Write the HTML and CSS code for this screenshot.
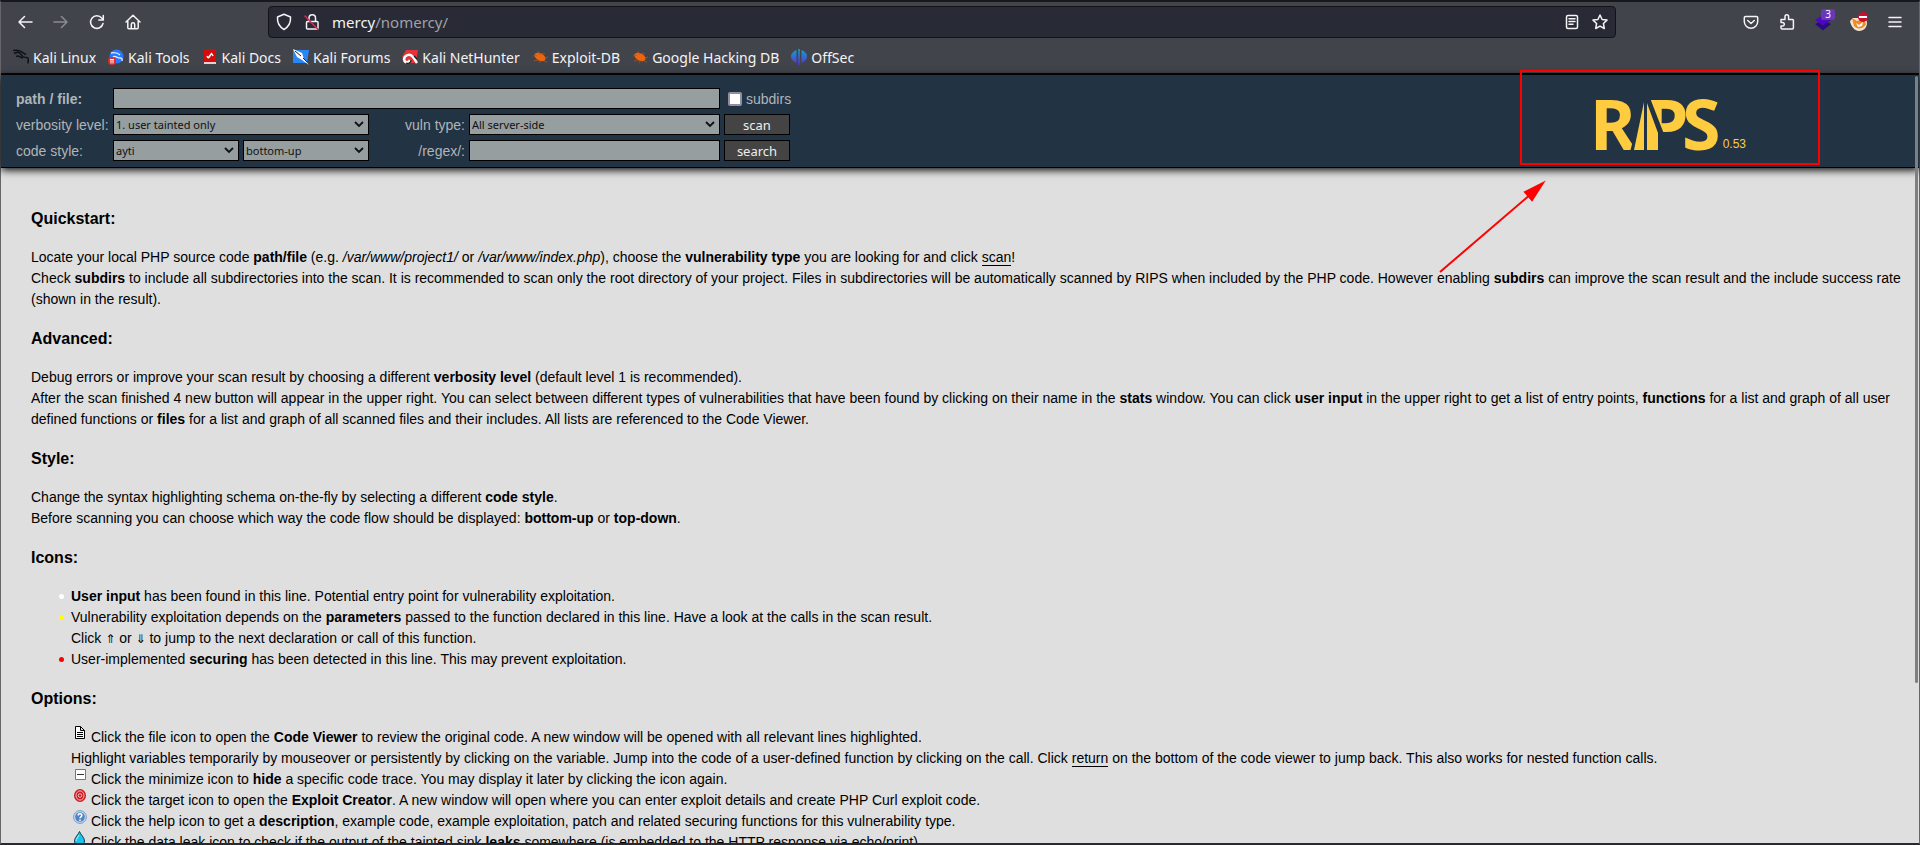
FILE: index.html
```html
<!DOCTYPE html>
<html lang="en">
<head>
<meta charset="utf-8">
<title>RIPS - A static source code analyser for vulnerabilities in PHP scripts</title>
<link rel="stylesheet" href="styles.css">
</head>
<body>
<div class="window">
  <div class="toolbar">
    <nav class="nav-buttons" aria-label="Navigation">
      <button type="button" class="icon-btn" aria-label="Back"><svg width="16" height="16" viewBox="0 0 16 16"><path d="M15 8H2M7.500 2.500 2 8l5.500 5.500"/></svg></button>
      <button type="button" class="icon-btn disabled" aria-label="Forward" disabled><svg width="16" height="16" viewBox="0 0 16 16"><path d="M1 8h13M8.500 2.500 14 8l-5.500 5.500"/></svg></button>
      <button type="button" class="icon-btn" aria-label="Reload"><svg width="16" height="16" viewBox="0 0 16 16"><path d="M14 9.500A6.300 6.300 0 1 1 12.700 4L14 5.500"/><path d="M14.300 1.500V6H9.800"/></svg></button>
      <button type="button" class="icon-btn" aria-label="Home"><svg width="16" height="16" viewBox="0 0 16 16"><path d="M1 8l7-6.800L15 8M2.800 7v6.700a1 1 0 0 0 1 1h8.400a1 1 0 0 0 1-1V7M6.300 14.500v-4a1.700 1.700 0 0 1 3.400 0v4"/></svg></button>
    </nav>
    <div class="urlbar">
      <svg width="16" height="18" viewBox="0 0 16 18"><path d="M8 1.200 14.500 4c.4 5-1.500 9.500-6.500 12.500C3 13.500 1.100 9 1.500 4Z"/></svg>
      <svg width="16" height="18" viewBox="0 0 16 18"><path d="M5 8V5a3 3 0 0 1 6.500 0v3M3.500 8.500h9.500a1 1 0 0 1 1 1v5.500a1 1 0 0 1-1 1H3.500a1 1 0 0 1-1-1V9.500a1 1 0 0 1 1-1Z"/><path class="slash" d="M1 3l13 13.500"/></svg>
      <span class="url"><b>mercy</b>/nomercy/</span>
      <button type="button" class="icon-btn" aria-label="Reader view"><svg width="14" height="16" viewBox="0 0 14 16"><rect x="1.500" y="1.500" width="11" height="13" rx="1.500"/><path d="M4 4.800h6M4 7.500h6M4 10.200h4"/></svg></button>
      <button type="button" class="icon-btn" aria-label="Bookmark this page"><svg width="16" height="16" viewBox="0 0 16 16"><path d="M8 1l2.100 4.500 4.900.6-3.600 3.400.9 5L8 12.100l-4.300 2.400.9-5L1 6.100l4.900-.6Z"/></svg></button>
    </div>
    <div class="extensions">
      <button type="button" class="icon-btn" aria-label="Pocket"><svg width="16" height="16" viewBox="0 0 16 16"><path d="M2.500 2.500h11a1.200 1.200 0 0 1 1.200 1.200V7.500a6.700 6.700 0 0 1-13.400 0V3.700a1.200 1.200 0 0 1 1.200-1.200ZM4.700 6.500 8 9.500l3.300-3"/></svg></button>
      <button type="button" class="icon-btn" aria-label="Extensions"><svg width="16" height="18" viewBox="0 0 16 18"><path d="M2 6.500h4V3.500a1.800 1.800 0 0 1 3.600 0v3h4a.8.8 0 0 1 .8.800V15a1 1 0 0 1-1 1H3a1 1 0 0 1-1-1v-2h1.500a1.800 1.800 0 0 0 0-3.600H2Z"/></svg></button>
      <button type="button" class="icon-btn" aria-label="Wappalyzer, 3 found"><svg width="16" height="18" viewBox="0 0 16 18"><path fill="#2b0a80" stroke="none" d="M0 11l8-4 8 4-8 6.500Z"/><path fill="#4b08bd" stroke="none" d="M0 7l8-5 8 5-8 5.500Z"/></svg><span class="badge">3</span></button>
      <button type="button" class="icon-btn" aria-label="FoxyProxy, disabled"><svg class="fox" width="20" height="20" viewBox="0 0 20 20"><g stroke="none"><path fill="#f1e4d4" d="M1 9l3-3h13l1 5c0 5-4 8-8 8s-8-4-9-10Z"/><path fill="#f08a24" d="M3 6l5 3 7-2 2 5c-2 5-9 6-12 2Z"/><path fill="#fff" d="M7 11l3 2 4-3-1 4-4 1Z"/><circle cx="14" cy="5" r="5" fill="#c8102e"/><path fill="#fff" d="M10 4h8v2h-8z"/></g></svg></button>
      <button type="button" class="icon-btn" aria-label="Menu"><svg width="14" height="16" viewBox="0 0 14 16"><path d="M1 3.500h12M1 8h12M1 12.500h12"/></svg></button>
    </div>
  </div>

  <nav class="bookmarks" aria-label="Bookmarks">
    <a href="#"><svg width="16" height="16" viewBox="0 0 16 16"><path fill="none" stroke="#111417" stroke-width="1.600" d="M0 1.500c5-1 8 0 11 3l2 1M1 4.500c4-2 6-1 7 1s4 3 6 3 1 3 1 6M3 7.500c3-2 3 1 7 1.500"/></svg>Kali Linux</a>
    <a href="#"><svg width="16" height="16" viewBox="0 0 16 16"><circle cx="8.500" cy="7.500" r="7" fill="#2777ff"/><path fill="none" stroke="#dce9ff" stroke-width="1.400" d="M3 4c4-1 7 0 9 2M5 8c2-2 4 1 7 1s2 2 2 3"/><circle cx="4" cy="12" r="4" fill="#e12c2c"/><path stroke="#fff" d="M2 10.500h4M3 10.500v4M5 10.500v4"/></svg>Kali Tools</a>
    <a href="#"><svg width="16" height="16" viewBox="0 0 16 16"><path fill="#d40c0c" d="M2 1l1-1h11v13H2z"/><path fill="#e8d0d0" d="M2 13h12v2H2z"/><path fill="none" stroke="#fff" stroke-width="1.400" d="M5 7c1 3 2 2 3 0s2-3 3 0M6 9l4-5"/></svg>Kali Docs</a>
    <a href="#"><svg width="16" height="16" viewBox="0 0 16 16"><path fill="#2a86f5" d="M0 1h16l-2 13H0z"/><path fill="#fff" d="M0 0l9 4 2 6 5 6-7-5-5-3Z"/><path stroke="#1b1e24" d="M2 2l6 5M10 9l4 4"/></svg>Kali Forums</a>
    <a href="#"><svg width="16" height="16" viewBox="0 0 16 16"><path fill="#e3343b" d="M4 1h12l-2 13H4L0 8Z"/><path fill="none" stroke="#fff" stroke-width="2.500" d="M2 11c0-5 6-7 9-3s2 3 4 6M2 11c1 3 5 3 6 0"/><path fill="none" stroke="#15171b" stroke-width="1.200" d="M4 14c2 1 5 0 5-3M12 7l3 3"/></svg>Kali NetHunter</a>
    <a href="#"><svg width="16" height="16" viewBox="0 0 16 16"><ellipse cx="8" cy="8" rx="6" ry="3.600" transform="rotate(28 8 8)" fill="#f0640c"/><path stroke="#b9531c" stroke-width=".7" d="M1 7l4-1M6 2l2 4M10 4l3 1M2 12l4-1M7 14l2-3M13 9l3-1M12 12l3 1"/></svg>Exploit-DB</a>
    <a href="#"><svg width="16" height="16" viewBox="0 0 16 16"><ellipse cx="8" cy="8" rx="6" ry="3.600" transform="rotate(28 8 8)" fill="#f0640c"/><path stroke="#b9531c" stroke-width=".7" d="M1 7l4-1M6 2l2 4M10 4l3 1M2 12l4-1M7 14l2-3M13 9l3-1M12 12l3 1"/></svg>Google Hacking DB</a>
    <a href="#"><svg width="16" height="16" viewBox="0 0 16 16"><defs><linearGradient id="offsec" x1="0" y1="0" x2="0" y2="1"><stop offset="0" stop-color="#12a3c8"/><stop offset="1" stop-color="#5c2fd6"/></linearGradient></defs><path fill="url(#offsec)" d="M5.500 1v13C-2 11-2 4 5.500 1ZM7.200 0h1.600v16H7.200zM10.500 1v13c7.500-3 7.500-10 0-13Z"/></svg>OffSec</a>
  </nav>

  <div class="page">
    <header class="menu">
      <form class="options">
        <label for="location"><b>path / file:</b></label>
        <input type="text" id="location" class="field wide">
        <span class="check"><input type="checkbox" id="subdirs"><label for="subdirs">subdirs</label></span>

        <label for="verbosity">verbosity level:</label>
        <select id="verbosity" class="field"><option>1. user tainted only</option></select>
        <label for="vector" class="right">vuln type:</label>
        <select id="vector" class="field"><option>All server-side</option></select>
        <button type="button" class="action">scan</button>

        <label for="css">code style:</label>
        <span class="pair">
          <select id="css" class="field"><option>ayti</option></select>
          <select id="treestyle" class="field" aria-label="code flow"><option>bottom-up</option></select>
        </span>
        <label for="search" class="right">/regex/:</label>
        <input type="text" id="search" class="field">
        <button type="button" class="action">search</button>
      </form>
      <div class="logo">
        <svg width="126" height="60" viewBox="0 0 126 60">
          <text class="logo-letter" x="-6" y="55">R</text>
          <text class="logo-letter" x="49" y="55">P</text>
          <text class="logo-letter" x="86" y="55">S</text>
          <path class="logo-gap" d="M48 3h6l14 36v18H34Z"/>
          <path class="logo-mark" d="M48 7v48H38ZM51 8l11 30v17H51Z"/>
        </svg>
        <span class="version">0.53</span>
        <svg class="annotation" width="384" height="206" viewBox="0 0 384 206">
          <rect x="82" y="2" width="298" height="93"/>
          <path d="M1 203 92 125"/>
          <path class="arrow-head" d="M104 114 93 131l-7-8Z"/>
        </svg>
      </div>
    </header>

    <main class="content">
      <h3>Quickstart:</h3>
      <p>Locate your local PHP source code <b>path/file</b> (e.g. <em>/var/www/project1/</em> or <em>/var/www/index.php</em>), choose the <b>vulnerability type</b> you are looking for and click <a href="#">scan</a>!<br>
      Check <b>subdirs</b> to include all subdirectories into the scan. It is recommended to scan only the root directory of your project. Files in subdirectories will be automatically scanned by RIPS when included by the PHP code. However enabling <b>subdirs</b> can improve the scan result and the include success rate (shown in the result).</p>
      <h3>Advanced:</h3>
      <p>Debug errors or improve your scan result by choosing a different <b>verbosity level</b> (default level 1 is recommended).<br>
      After the scan finished 4 new button will appear in the upper right. You can select between different types of vulnerabilities that have been found by clicking on their name in the <b>stats</b> window. You can click <b>user input</b> in the upper right to get a list of entry points, <b>functions</b> for a list and graph of all user defined functions or <b>files</b> for a list and graph of all scanned files and their includes. All lists are referenced to the Code Viewer.</p>
      <h3>Style:</h3>
      <p>Change the syntax highlighting schema on-the-fly by selecting a different <b>code style</b>.<br>
      Before scanning you can choose which way the code flow should be displayed: <b>bottom-up</b> or <b>top-down</b>.</p>
      <h3>Icons:</h3>
      <ul class="markers">
        <li class="userinput"><b>User input</b> has been found in this line. Potential entry point for vulnerability exploitation.</li>
        <li class="functioninput">Vulnerability exploitation depends on the <b>parameters</b> passed to the function declared in this line. Have a look at the calls in the scan result.<br>Click <span class="jump">⇑</span> or <span class="jump">⇓</span> to jump to the next declaration or call of this function.</li>
        <li class="validated">User-implemented <b>securing</b> has been detected in this line. This may prevent exploitation.</li>
      </ul>
      <h3>Options:</h3>
      <ul class="plain">
        <li><svg width="14" height="14" viewBox="0 0 14 14"><path fill="#fff" stroke="#000" d="M2.500.5h5l4 4v8h-9ZM7.500.5v4h4M4 6.500h6M4 8.500h6M4 10.500h6"/></svg> Click the file icon to open the <b>Code Viewer</b> to review the original code. A new window will be opened with all relevant lines highlighted.<br>Highlight variables temporarily by mouseover or persistently by clicking on the variable. Jump into the code of a user-defined function by clicking on the call. Click <a href="#">return</a> on the bottom of the code viewer to jump back. This also works for nested function calls.</li>
        <li><svg width="14" height="14" viewBox="0 0 14 14"><path fill="#fff" stroke="#777" d="M2.500 1.500h10v10h-10z"/><path stroke="#333" d="M4 6.500h7"/></svg> Click the minimize icon to <b>hide</b> a specific code trace. You may display it later by clicking the icon again.</li>
        <li><svg width="14" height="14" viewBox="0 0 14 14"><ellipse cx="7" cy="6.500" rx="6" ry="6.500" fill="#cf1820"/><ellipse cx="7" cy="6.500" rx="4" ry="4.600" fill="none" stroke="#f2c4c4"/><circle cx="7" cy="6.500" r="1.800" fill="#cf1820" stroke="#f2c4c4"/></svg> Click the target icon to open the <b>Exploit Creator</b>. A new window will open where you can enter exploit details and create PHP Curl exploit code.</li>
        <li><svg width="14" height="14" viewBox="0 0 14 14"><circle cx="7" cy="7" r="6.400" fill="#c4daf3" stroke="#7d9cc4"/><circle cx="7" cy="7" r="4.800" fill="#5083c2"/><path fill="none" stroke="#fff" stroke-width="1.500" d="M5.200 5.500c0-2.200 3.600-2.200 3.600 0 0 1.300-1.800 1.300-1.800 2.800M7 9.500V11"/></svg> Click the help icon to get a <b>description</b>, example code, example exploitation, patch and related securing functions for this vulnerability type.</li>
        <li><svg width="14" height="14" viewBox="0 0 14 14"><path fill="#19c5ee" stroke="#123c4c" d="M6.500.5c1 3 5 6 5 9.500a5 5 0 0 1-10 0c0-3.500 4-6.500 5-9.500Z"/><path fill="none" stroke="#b8f3ff" d="M6 4c-1 2-3 4-3 6"/></svg> Click the data leak icon to check if the output of the tainted sink <b>leaks</b> somewhere (is embedded to the HTTP response via echo/print).</li>
      </ul>
    </main>
    <div class="scroll-thumb"></div>
  </div>
</div>
</body>
</html>
```
FILE: styles.css
```css
* {
  box-sizing: border-box;
}

body {
  margin: 0;
  background: #222226;
  font-family: "Liberation Sans", sans-serif;
  font-size: 14px;
}

.window {
  display: flex;
  flex-direction: column;
  height: 100vh;
  border: 1px solid #66666a;
  border-top: 2px solid #17181c;
  border-bottom: 2px solid #2a2a2e;
  background: #42444c;
}

/* Browser chrome */
.toolbar,
.bookmarks {
  flex: none;
  font-family: "Noto Sans", sans-serif;
  color: #f4f4f6;
}

.toolbar {
  display: flex;
  align-items: center;
  height: 39px;
  padding: 0 16px;
}

.toolbar svg {
  display: block;
  flex: none;
  fill: none;
  stroke: #f4f4f6;
  stroke-width: 1.5;
  stroke-linecap: round;
  stroke-linejoin: round;
}

.icon-btn {
  position: relative;
  display: flex;
  justify-content: center;
  width: 16px;
  padding: 0;
  border: 0;
  background: none;
}

.disabled {
  opacity: 0.4;
}

.nav-buttons,
.extensions {
  display: flex;
  align-items: center;
  gap: 20px;
}

.urlbar {
  display: flex;
  flex: 1;
  align-items: center;
  gap: 12px;
  height: 32px;
  margin: 0 127px;
  padding: 0 7px;
  border: 1px solid #121217;
  border-radius: 4px;
  background: #282a35;
}

.toolbar .slash {
  stroke: #e22850;
}

.url {
  flex: 1;
  color: #a0a1a8;
  font-size: 15px;
}

.url b {
  color: #f4f4f6;
  font-weight: normal;
}

.badge {
  position: absolute;
  top: -4px;
  left: 6px;
  width: 14px;
  border-radius: 2px;
  background: #6838b8;
  color: #fff;
  font: 10px/11px "Noto Sans", sans-serif;
  text-align: center;
}

.bookmarks {
  display: flex;
  align-items: center;
  gap: 12px;
  height: 34px;
  padding: 0 12px;
  border-bottom: 2px solid #060609;
}

.bookmarks a {
  display: flex;
  align-items: center;
  gap: 4px;
  color: inherit;
  font-size: 14px;
  text-decoration: none;
  white-space: nowrap;
}

/* RIPS page */
.page {
  position: relative;
  display: flex;
  flex: 1;
  flex-direction: column;
  min-height: 0;
  background: #dfdfdf;
}

.menu {
  display: flex;
  flex: none;
  justify-content: space-between;
  padding: 13px 173px 6px 15px;
  border-bottom: 1px solid #000;
  background: #223344;
  box-shadow: 0 2px 8px #000;
  color: #b0b5b8;
}

.options {
  display: grid;
  grid-template-columns: 93px 256px 92px 251px 66px;
  grid-auto-rows: 21px;
  gap: 5px 4px;
  align-items: center;
}

.wide {
  grid-column: 2 / 5;
}

.right {
  text-align: right;
}

.field {
  width: 100%;
  height: 21px;
  margin: 0;
  padding: 0 2px;
  border: 1px solid #000;
  border-radius: 0;
  background-color: #969ea0;
  color: #111;
  font: 11px "Noto Sans", sans-serif;
}

select.field {
  appearance: none;
  background-image: url("data:image/svg+xml,%3Csvg xmlns='http://www.w3.org/2000/svg' width='10' height='7'%3E%3Cpath d='M1 1l4 4 4-4' fill='none' stroke='%23111' stroke-width='1.800'/%3E%3C/svg%3E");
  background-repeat: no-repeat;
  background-position: right 4px center;
}

.pair {
  display: flex;
  gap: 4px;
}

.check {
  display: flex;
  align-items: center;
  gap: 4px;
  padding-left: 4px;
}

.check input {
  appearance: none;
  flex: none;
  width: 14px;
  height: 14px;
  margin: 0;
  border: 2px solid #8f8f9d;
  border-radius: 2px;
  background: #fff;
}

.action {
  height: 21px;
  padding: 0;
  border: 1px solid #000;
  background: #444;
  color: #eee;
  font: 13px "Noto Sans", sans-serif;
}

.logo {
  position: relative;
  display: flex;
  align-items: flex-end;
  height: 67px;
  gap: 1px;
}

.logo > svg {
  display: block;
  overflow: visible;
}

.logo-letter {
  fill: #ffcc40;
  font: bold 70px "Noto Sans", sans-serif;
}

.logo-gap {
  fill: #223344;
}

.logo-mark {
  fill: #ffcc40;
}

.version {
  padding-bottom: 4px;
  color: #ffcc40;
  font-size: 12px;
}

.logo .annotation {
  position: absolute;
  top: -19px;
  left: -157px;
  z-index: 2;
  fill: none;
  stroke: #f00;
  stroke-width: 2;
  pointer-events: none;
}

.annotation .arrow-head {
  fill: #f00;
}

.content {
  flex: 1;
  min-height: 0;
  padding: 40px 12px 0 30px;
  overflow: hidden;
  color: #000;
  line-height: 21px;
}

.content h3 {
  margin: 0 0 18px;
  font-size: 16px;
  line-height: 21px;
}

.content p,
.content ul {
  margin: 0 0 18px;
}

.content ul {
  padding-left: 40px;
  list-style: none;
}

.content a {
  color: #000;
  text-decoration: none;
  border-bottom: 1px solid #000;
}

.markers li::before {
  content: "";
  display: inline-block;
  width: 5px;
  height: 5px;
  margin: 0 7px 0 -12px;
  border-radius: 50%;
  background: currentColor;
  vertical-align: 2px;
}

.userinput::before {
  color: #fff;
}

.functioninput::before {
  color: #ff0;
}

.validated::before {
  color: #f00;
}

.jump {
  font-family: "DejaVu Sans", sans-serif;
  font-size: 12px;
  line-height: 1;
}

.plain svg {
  margin: -4px 0 0 2px;
  vertical-align: 2px;
}

.scroll-thumb {
  position: absolute;
  top: 1px;
  right: 1px;
  width: 3px;
  height: 79%;
  border-radius: 2px;
  background: #7c8080;
}
```
